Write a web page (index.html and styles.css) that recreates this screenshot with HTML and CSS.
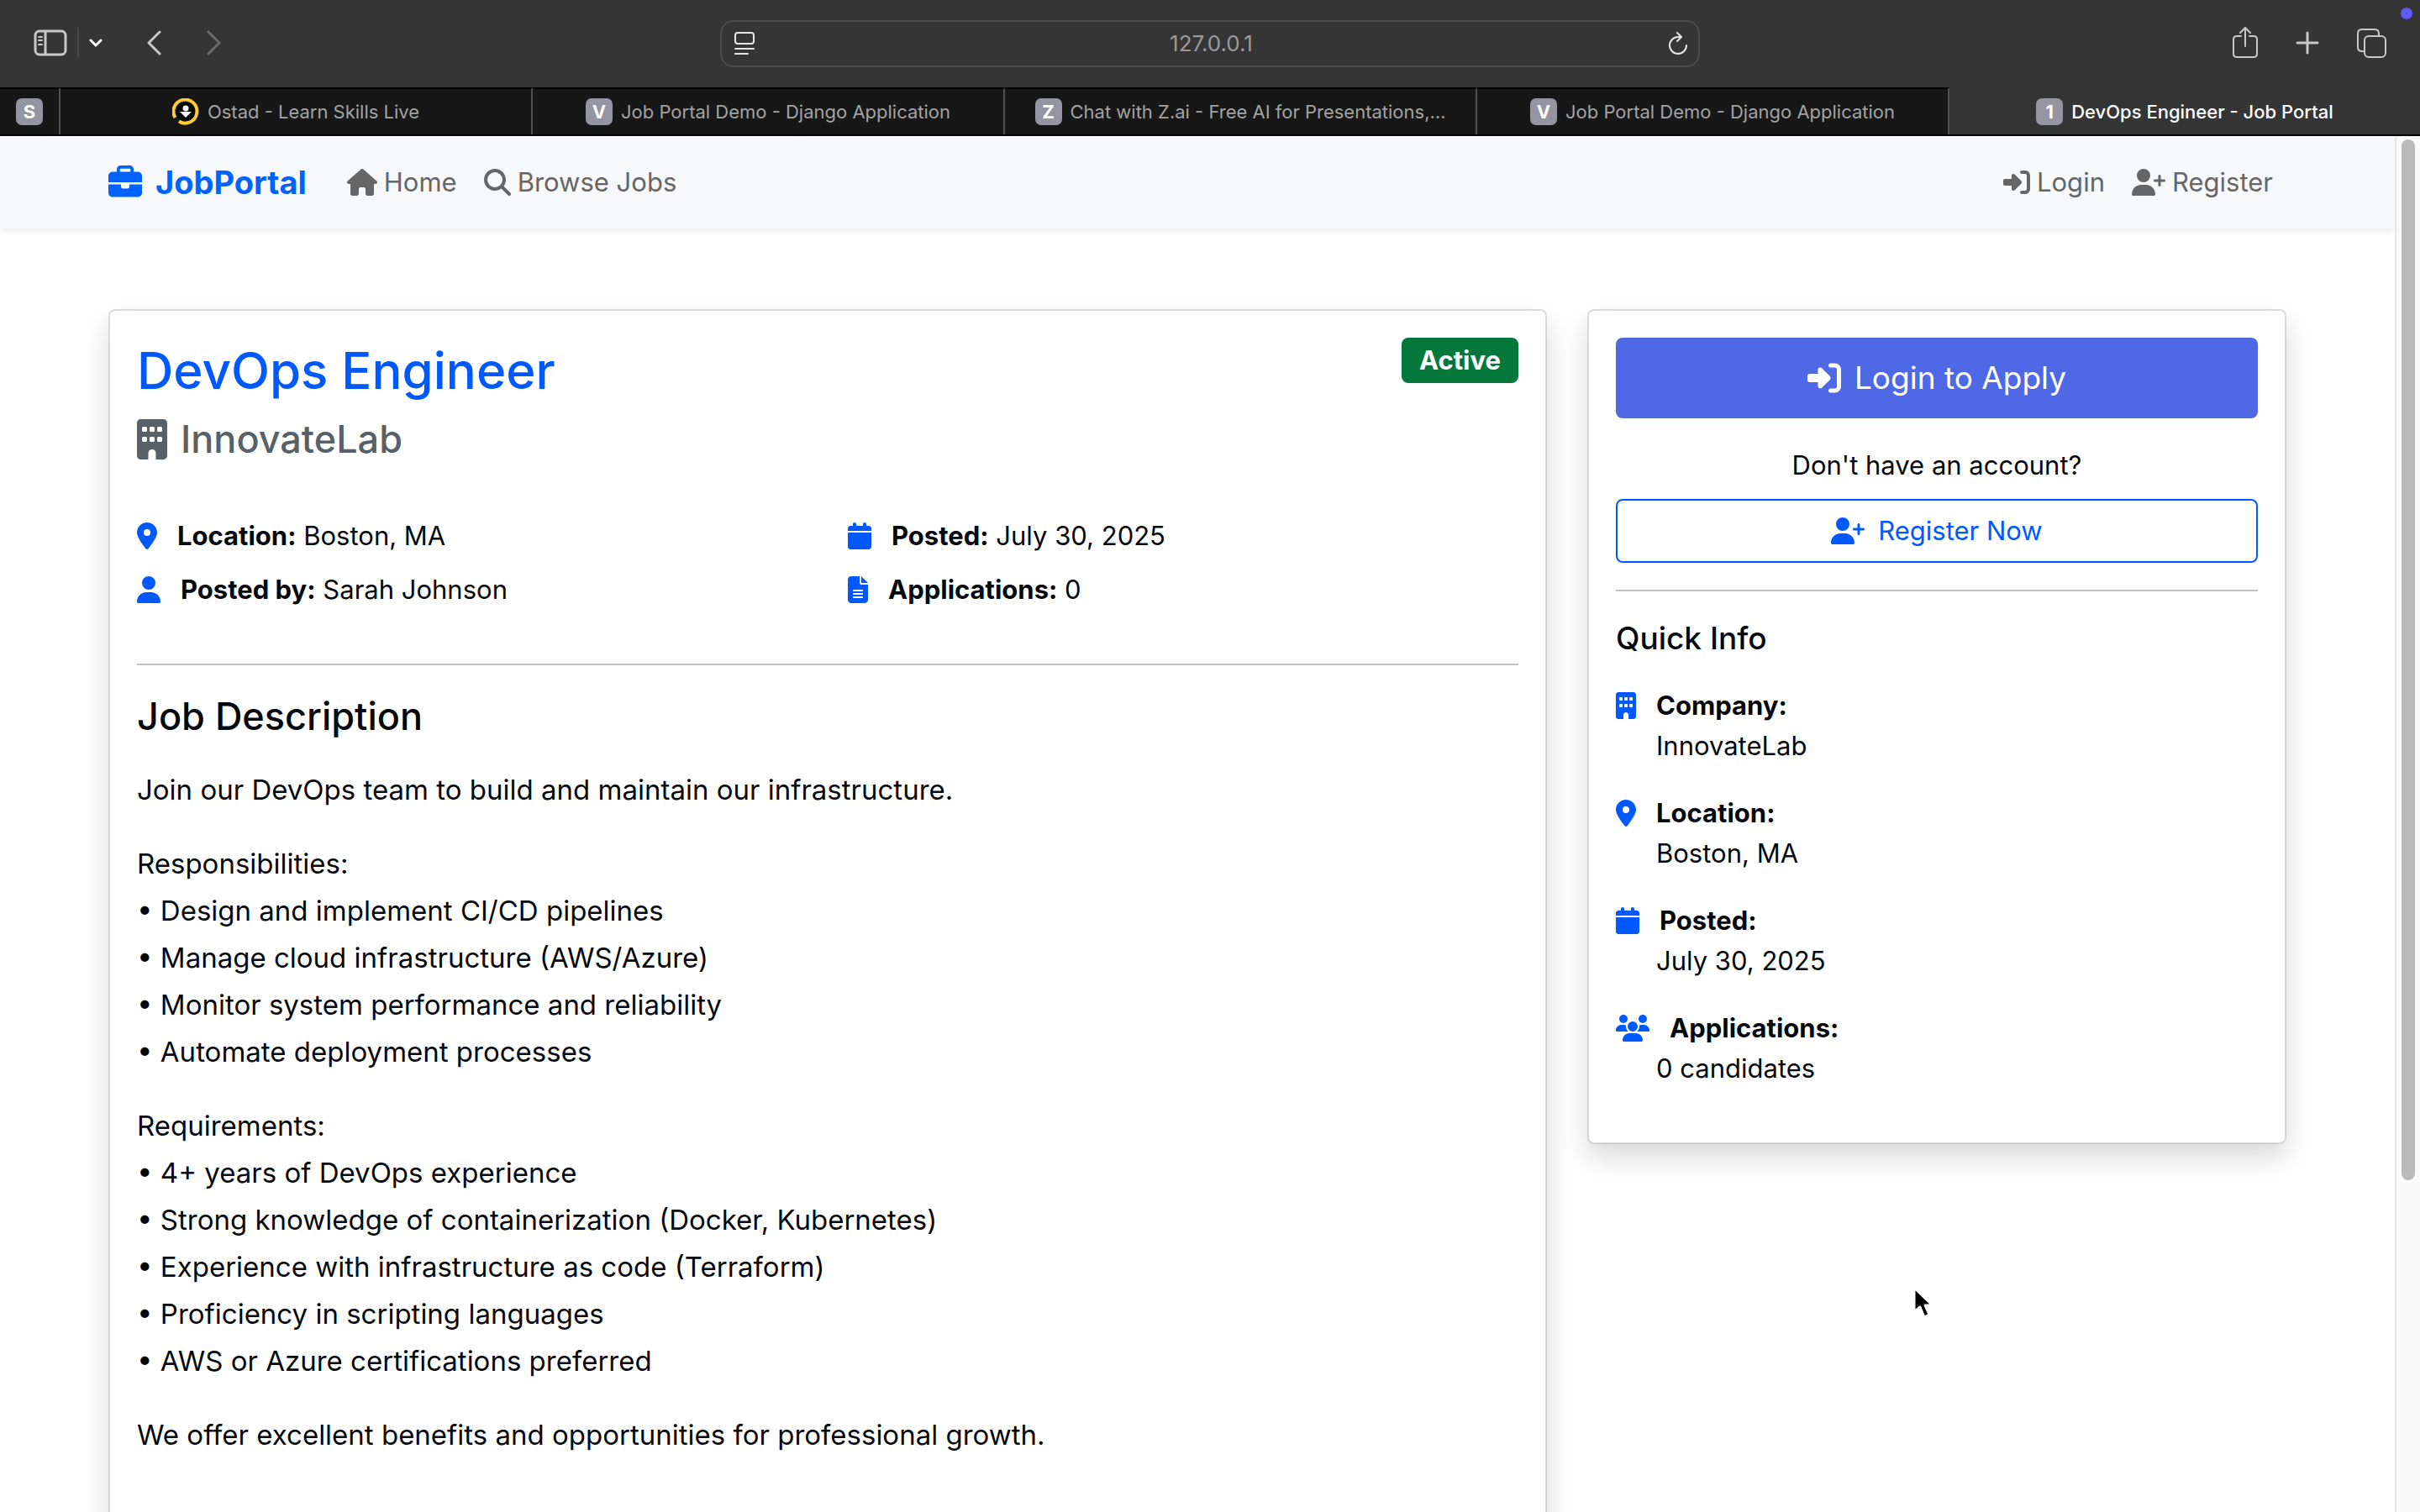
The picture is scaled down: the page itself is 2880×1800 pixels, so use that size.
FILE: index.html
```html
<!DOCTYPE html>
<html lang="en">
<head>
<meta charset="utf-8">
<title>DevOps Engineer - Job Portal</title>
<link rel="stylesheet" href="styles.css">
</head>
<body>
<svg class="sprite" aria-hidden="true">
  <symbol id="briefcase" viewBox="0 0 512 512"><path d="M184 48l144 0c4.400 0 8 3.600 8 8l0 40L176 96l0-40c0-4.400 3.600-8 8-8zm-56 8l0 40L64 96C28.700 96 0 124.700 0 160l0 96 192 0 128 0 192 0 0-96c0-35.300-28.700-64-64-64l-64 0 0-40c0-30.900-25.100-56-56-56L184 0c-30.900 0-56 25.100-56 56zM512 288l-192 0 0 32c0 17.700-14.300 32-32 32l-64 0c-17.700 0-32-14.300-32-32l0-32L0 288 0 416c0 35.300 28.700 64 64 64l384 0c35.300 0 64-28.700 64-64l0-128z"/></symbol>
  <symbol id="house" viewBox="0 0 576 512"><path d="M575.8 255.500c0 18-15 32.100-32 32.100l-32 0 .7 160.200c0 2.700-.2 5.400-.5 8.100l0 16.200c0 22.100-17.900 40-40 40l-16 0c-1.100 0-2.200 0-3.300-.1c-1.400 .1-2.800 .1-4.200 .1L416 512l-24 0c-22.100 0-40-17.900-40-40l0-24 0-64c0-17.700-14.300-32-32-32l-64 0c-17.700 0-32 14.300-32 32l0 64 0 24c0 22.100-17.900 40-40 40l-24 0-31.900 0c-1.500 0-3-.1-4.500-.2c-1.200 .1-2.400 .2-3.600 .2l-16 0c-22.100 0-40-17.900-40-40l0-112c0-.9 0-1.900 .1-2.800l0-69.700-32 0c-18 0-32-14-32-32.100c0-9 3-17 10-24L266.400 8c7-7 15-8 22-8s15 2 21 7L564.800 231.500c8 7 12 15 11 24z"/></symbol>
  <symbol id="search" viewBox="0 0 512 512"><path d="M416 208c0 45.900-14.900 88.300-40 122.700L502.600 457.400c12.500 12.500 12.500 32.800 0 45.300s-32.800 12.500-45.300 0L330.700 376c-34.400 25.200-76.800 40-122.700 40C93.100 416 0 322.900 0 208S93.100 0 208 0S416 93.100 416 208zM208 352a144 144 0 1 0 0-288 144 144 0 1 0 0 288z"/></symbol>
  <symbol id="login" viewBox="0 0 512 512"><path d="M217.900 105.900L340.700 228.700c7.200 7.200 11.300 17.100 11.300 27.300s-4.100 20.100-11.300 27.300L217.900 406.100c-6.400 6.400-15 9.900-24 9.900c-18.700 0-33.900-15.200-33.900-33.900l0-62.100L32 320c-17.700 0-32-14.300-32-32l0-64c0-17.700 14.300-32 32-32l128 0 0-62.100c0-18.700 15.200-33.900 33.900-33.900c9 0 17.600 3.600 24 9.900zM352 416l64 0c17.700 0 32-14.300 32-32l0-256c0-17.700-14.300-32-32-32l-64 0c-17.700 0-32-14.300-32-32s14.300-32 32-32l64 0c53 0 96 43 96 96l0 256c0 53-43 96-96 96l-64 0c-17.700 0-32-14.300-32-32s14.300-32 32-32z"/></symbol>
  <symbol id="user-plus" viewBox="0 0 640 512"><path d="M96 128a128 128 0 1 1 256 0A128 128 0 1 1 96 128zM0 482.300C0 383.800 79.800 304 178.300 304l91.400 0C368.200 304 448 383.800 448 482.300c0 16.400-13.300 29.700-29.700 29.700L29.700 512C13.300 512 0 498.700 0 482.300zM504 312l0-64-64 0c-13.300 0-24-10.700-24-24s10.700-24 24-24l64 0 0-64c0-13.300 10.700-24 24-24s24 10.700 24 24l0 64 64 0c13.300 0 24 10.700 24 24s-10.700 24-24 24l-64 0 0 64c0 13.300-10.700 24-24 24s-24-10.700-24-24z"/></symbol>
  <symbol id="user" viewBox="0 0 448 512"><path d="M224 256A128 128 0 1 0 224 0a128 128 0 1 0 0 256zm-45.700 48C79.800 304 0 383.800 0 482.300C0 498.700 13.300 512 29.700 512l388.600 0c16.400 0 29.700-13.300 29.700-29.700C448 383.800 368.200 304 269.700 304l-91.400 0z"/></symbol>
  <symbol id="pin" viewBox="0 0 384 512"><path d="M215.700 499.200C267 435 384 279.400 384 192C384 86 298 0 192 0S0 86 0 192c0 87.400 117 243 168.300 307.200c12.300 15.300 35.100 15.300 47.400 0zM192 128a64 64 0 1 1 0 128 64 64 0 1 1 0-128z"/></symbol>
  <symbol id="calendar" viewBox="0 0 448 512"><path d="M96 32l0 32L48 64C21.500 64 0 85.500 0 112l0 48 448 0 0-48c0-26.500-21.500-48-48-48l-48 0 0-32c0-17.700-14.300-32-32-32s-32 14.300-32 32l0 32L160 64l0-32c0-17.700-14.300-32-32-32S96 14.300 96 32zM448 192L0 192 0 464c0 26.500 21.500 48 48 48l352 0c26.500 0 48-21.500 48-48l0-272z"/></symbol>
  <symbol id="file" viewBox="0 0 384 512"><path d="M64 0C28.700 0 0 28.700 0 64L0 448c0 35.300 28.700 64 64 64l256 0c35.300 0 64-28.700 64-64l0-288-128 0c-17.700 0-32-14.300-32-32L224 0 64 0zM256 0l0 128 128 0L256 0zM112 256l160 0c8.800 0 16 7.200 16 16s-7.200 16-16 16l-160 0c-8.800 0-16-7.200-16-16s7.200-16 16-16zm0 64l160 0c8.800 0 16 7.200 16 16s-7.200 16-16 16l-160 0c-8.800 0-16-7.200-16-16s7.200-16 16-16zm0 64l160 0c8.800 0 16 7.200 16 16s-7.200 16-16 16l-160 0c-8.800 0-16-7.200-16-16s7.200-16 16-16z"/></symbol>
  <symbol id="building" viewBox="0 0 384 512"><path fill-rule="evenodd" d="M48 0C21.500 0 0 21.500 0 48L0 464c0 26.500 21.500 48 48 48l96 0 0-80c0-26.500 21.500-48 48-48s48 21.500 48 48l0 80 96 0c26.500 0 48-21.500 48-48l0-416c0-26.500-21.500-48-48-48L48 0zM80 96h32q16 0 16 16v32q0 16-16 16h-32q-16 0-16-16v-32q0-16 16-16zM176 96h32q16 0 16 16v32q0 16-16 16h-32q-16 0-16-16v-32q0-16 16-16zM272 96h32q16 0 16 16v32q0 16-16 16h-32q-16 0-16-16v-32q0-16 16-16zM80 224h32q16 0 16 16v32q0 16-16 16h-32q-16 0-16-16v-32q0-16 16-16zM176 224h32q16 0 16 16v32q0 16-16 16h-32q-16 0-16-16v-32q0-16 16-16zM272 224h32q16 0 16 16v32q0 16-16 16h-32q-16 0-16-16v-32q0-16 16-16z"/></symbol>
  <symbol id="users" viewBox="0 0 640 512"><path d="M144 0a80 80 0 1 1 0 160A80 80 0 1 1 144 0zM512 0a80 80 0 1 1 0 160A80 80 0 1 1 512 0zM0 298.700C0 239.800 47.800 192 106.700 192l42.700 0c15.900 0 31 3.500 44.600 9.700c-1.300 7.200-1.900 14.700-1.900 22.300c0 38.200 16.800 72.500 43.300 96c-.2 0-.4 0-.7 0L21.300 320C9.600 320 0 310.400 0 298.700zM405.300 320c-.2 0-.4 0-.7 0c26.600-23.500 43.300-57.800 43.300-96c0-7.600-.7-15-1.900-22.300c13.600-6.300 28.700-9.700 44.600-9.700l42.700 0C592.200 192 640 239.800 640 298.700c0 11.800-9.600 21.300-21.300 21.300l-213.300 0zM224 224a96 96 0 1 1 192 0 96 96 0 1 1 -192 0zM128 485.300C128 411.700 187.700 352 261.300 352l117.300 0C452.300 352 512 411.700 512 485.300c0 14.700-11.900 26.700-26.700 26.700l-330.700 0c-14.700 0-26.700-11.900-26.700-26.700z"/></symbol>
</svg>

<header class="toolbar">
  <div class="tools">
    <button class="tool" type="button" aria-label="Show sidebar"><svg width="40" height="32" viewBox="0 0 40 32"><g fill="none" stroke="currentColor" stroke-width="3"><rect x="2" y="2" width="36" height="28" rx="5"/><path d="M14 2v28"/><path stroke-width="2" stroke-linecap="round" d="M6 9h4M6 13h4M6 18h4"/></g></svg></button>
    <span class="tool-divider"></span>
    <button class="tool" type="button" aria-label="Tab groups"><svg width="16" height="12" viewBox="0 0 16 12"><path d="M2 3l6 6 6-6" fill="none" stroke="#fff" stroke-width="3" stroke-linecap="round" stroke-linejoin="round"/></svg></button>
    <button class="tool tool-back" type="button" aria-label="Back"><svg width="18" height="30" viewBox="0 0 18 30"><path d="M16 2L3 15l13 13" fill="none" stroke="currentColor" stroke-width="3" stroke-linecap="round" stroke-linejoin="round"/></svg></button>
    <button class="tool tool-forward" type="button" aria-label="Forward" disabled><svg width="18" height="30" viewBox="0 0 18 30"><path d="M2 2l13 13L2 28" fill="none" stroke="currentColor" stroke-width="3" stroke-linecap="round" stroke-linejoin="round"/></svg></button>
  </div>
  <div class="address">
    <button class="tool bright" type="button" aria-label="Page menu"><svg width="24" height="28" viewBox="0 0 24 28"><g fill="none" stroke="currentColor" stroke-width="2" stroke-linecap="round"><rect x="1" y="1" width="22" height="13" rx="3"/><path d="M1 20h22M1 26h15"/></g></svg></button>
    <input class="address-field" type="text" value="127.0.0.1" aria-label="Address">
    <button class="tool bright" type="button" aria-label="Reload"><svg width="24" height="28" viewBox="0 0 24 28"><g fill="none" stroke="currentColor" stroke-width="2" stroke-linecap="round" stroke-linejoin="round"><path d="M22 16a10 10 0 1 1-10-10h4"/><path d="M11 1l5 5-5 5"/></g></svg></button>
  </div>
  <div class="tools tools-end">
    <button class="tool" type="button" aria-label="Share"><svg width="32" height="40" viewBox="0 0 32 40"><g fill="none" stroke="currentColor" stroke-width="2" stroke-linecap="round" stroke-linejoin="round"><path d="M11 12H6q-4 0-4 4v17q0 4 4 4h20q4 0 4-4V16q0-4-4-4h-5"/><path d="M16 24V2M10 8l6-6 6 6"/></g></svg></button>
    <button class="tool" type="button" aria-label="New tab"><svg width="28" height="28" viewBox="0 0 28 28"><path d="M14 2v24M2 14h24" stroke="currentColor" stroke-width="3" stroke-linecap="round"/></svg></button>
    <button class="tool" type="button" aria-label="Tab overview"><svg width="36" height="36" viewBox="0 0 36 36"><g fill="none" stroke="currentColor" stroke-width="2"><rect x="10" y="10" width="25" height="25" rx="5"/><path d="M10 28H7q-5 0-5-5V7q0-5 5-5h15q5 0 5 5v3"/></g></svg></button>
  </div>
  <span class="record-dot"></span>
</header>

<nav class="tabs" aria-label="Open tabs">
  <a class="tab pinned" href="#"><span class="favicon">S</span></a>
  <a class="tab" href="#"><svg class="ostad" viewBox="0 0 32 32"><path d="M3.500 23A14 14 0 1 1 8 27.500" fill="none" stroke="#fc3" stroke-width="4"/><circle cx="16" cy="16" r="11" fill="#000"/><circle cx="16" cy="12" r="3.500" fill="#fff"/><path d="M9 16h14l-7 7z" fill="#fff"/></svg><span class="tab-title">Ostad - Learn Skills Live</span></a>
  <a class="tab" href="#"><span class="favicon">V</span><span class="tab-title">Job Portal Demo - Django Application</span></a>
  <a class="tab" href="#"><span class="favicon">Z</span><span class="tab-title">Chat with Z.ai - Free AI for Presentations,…</span></a>
  <a class="tab" href="#"><span class="favicon">V</span><span class="tab-title">Job Portal Demo - Django Application</span></a>
  <a class="tab active" href="#" aria-current="page"><span class="favicon">1</span><span class="tab-title">DevOps Engineer - Job Portal</span></a>
</nav>

<div class="viewport">
  <div class="page">
    <nav class="navbar" aria-label="Main">
      <div class="container navbar-row">
        <a class="brand" href="#"><svg class="icon square"><use href="#briefcase"/></svg>JobPortal</a>
        <a class="nav-link" href="#"><svg class="icon house"><use href="#house"/></svg>Home</a>
        <a class="nav-link" href="#"><svg class="icon square"><use href="#search"/></svg>Browse Jobs</a>
        <a class="nav-link nav-end" href="#"><svg class="icon square"><use href="#login"/></svg>Login</a>
        <a class="nav-link" href="#"><svg class="icon wide"><use href="#user-plus"/></svg>Register</a>
      </div>
    </nav>

    <main class="container layout">
      <article class="card">
        <div class="job-head">
          <div>
            <h1 class="job-title">DevOps Engineer</h1>
            <h2 class="company"><svg class="icon narrow"><use href="#building"/></svg>InnovateLab</h2>
          </div>
          <span class="badge">Active</span>
        </div>
        <div class="facts">
          <p class="fact"><svg class="icon narrow"><use href="#pin"/></svg><span><strong>Location:</strong> Boston, MA</span></p>
          <p class="fact"><svg class="icon medium"><use href="#calendar"/></svg><span><strong>Posted:</strong> July 30, 2025</span></p>
          <p class="fact"><svg class="icon medium"><use href="#user"/></svg><span><strong>Posted by:</strong> Sarah Johnson</span></p>
          <p class="fact"><svg class="icon narrow"><use href="#file"/></svg><span><strong>Applications:</strong> 0</span></p>
        </div>
        <hr class="rule">
        <h2 class="section-title">Job Description</h2>
        <div class="description">
          <p>Join our DevOps team to build and maintain our infrastructure.</p>
          <p>Responsibilities:<br>• Design and implement CI/CD pipelines<br>• Manage cloud infrastructure (AWS/Azure)<br>• Monitor system performance and reliability<br>• Automate deployment processes</p>
          <p>Requirements:<br>• 4+ years of DevOps experience<br>• Strong knowledge of containerization (Docker, Kubernetes)<br>• Experience with infrastructure as code (Terraform)<br>• Proficiency in scripting languages<br>• AWS or Azure certifications preferred</p>
          <p>We offer excellent benefits and opportunities for professional growth.</p>
        </div>
      </article>

      <aside class="card">
        <button class="btn btn-primary" type="button"><svg class="icon square"><use href="#login"/></svg>Login to Apply</button>
        <p class="hint">Don't have an account?</p>
        <button class="btn btn-outline" type="button"><svg class="icon wide"><use href="#user-plus"/></svg>Register Now</button>
        <hr class="rule">
        <h2 class="side-title">Quick Info</h2>
        <dl class="info">
          <div class="info-item"><dt class="fact"><svg class="icon narrow"><use href="#building"/></svg>Company:</dt><dd>InnovateLab</dd></div>
          <div class="info-item"><dt class="fact"><svg class="icon narrow"><use href="#pin"/></svg>Location:</dt><dd>Boston, MA</dd></div>
          <div class="info-item"><dt class="fact"><svg class="icon medium"><use href="#calendar"/></svg>Posted:</dt><dd>July 30, 2025</dd></div>
          <div class="info-item"><dt class="fact"><svg class="icon wide"><use href="#users"/></svg>Applications:</dt><dd>0 candidates</dd></div>
        </dl>
      </aside>
    </main>
  </div>
  <div class="scrollbar" aria-hidden="true"><div class="thumb"></div></div>
</div>

<svg class="cursor" width="32" height="44" viewBox="0 0 32 44" aria-hidden="true"><path d="M3 3v29l7-6 5 12 6-3-5-11h9z" fill="#000" stroke="#fff" stroke-width="3" stroke-linejoin="round"/></svg>
</body>
</html>
```
FILE: styles.css
```css
* { box-sizing: border-box; }

body {
  margin: 0;
  height: 100vh;
  display: flex;
  flex-direction: column;
  overflow: hidden;
  position: relative;
  background: #fff;
  color: #05080c;
  font: 400 31px/48px Inter, "Liberation Sans", sans-serif;
}

h1, h2, p, dl, dd { margin: 0; }
a { color: inherit; text-decoration: none; }
button { font: inherit; cursor: pointer; }
.sprite { position: absolute; width: 0; height: 0; }

/* Browser toolbar */
.toolbar {
  position: relative;
  flex: none;
  display: grid;
  grid-template-columns: 1fr minmax(0, 1166px) 1fr;
  align-items: center;
  height: 104px;
  padding: 0 40px;
  background: #353535;
}
.tools { display: flex; align-items: center; padding-bottom: 2px; }
.tools-end { justify-content: flex-end; gap: 44px; }
.tool {
  display: flex;
  padding: 0;
  border: 0;
  background: none;
  color: #c8c8c8;
}
.tool.bright { color: #e6e6e6; }
.tool:disabled { color: #6b6b6b; }
.tool-divider { width: 2px; height: 36px; margin: 0 12px; background: #484848; }
.tool-back { margin-left: 52px; }
.tool-forward { margin-left: 54px; }
.address {
  display: flex;
  align-items: center;
  height: 56px;
  padding: 0 12px 0 15px;
  border: 2px solid #4c4c4c;
  border-radius: 16px;
}
.address-field {
  flex: 1;
  min-width: 0;
  padding: 0;
  border: 0;
  outline: 0;
  background: none;
  color: #9a9a9a;
  font: 400 26px/32px Inter, sans-serif;
  text-align: center;
}
.record-dot {
  position: absolute;
  top: 9px;
  right: 9px;
  width: 14px;
  height: 14px;
  border-radius: 50%;
  background: #6059f5;
}

/* Tab strip */
.tabs {
  flex: none;
  display: flex;
  height: 58px;
  border-bottom: 2px solid #000;
  background: #353535;
  color: #a3a3a3;
  font-size: 22px;
  line-height: 28px;
}
.tab {
  flex: 1 1 0;
  min-width: 0;
  display: flex;
  align-items: center;
  justify-content: center;
  gap: 10px;
  border-top: 2px solid #000;
  border-right: 2px solid #4e4e4e;
  background: #171717;
}
.tab.pinned { flex: 0 0 72px; }
.tab.active {
  border-right: 0;
  border-color: #353535;
  background: #353535;
  color: #fff;
  font-weight: 500;
}
.tab-title { white-space: nowrap; }
.favicon {
  width: 32px;
  height: 32px;
  border-radius: 7px;
  background: #9494a3;
  color: #fff;
  font-size: 22px;
  font-weight: 700;
  line-height: 32px;
  text-align: center;
}
.ostad { width: 32px; height: 32px; }

/* Web page area */
.viewport { flex: 1; min-height: 0; display: flex; }
.page { flex: 1; min-width: 0; overflow: hidden; }
.scrollbar {
  flex: none;
  width: 30px;
  padding: 4px 6px;
  border-left: 2px solid #e6e6e6;
  background: #fafafa;
}
.thumb { width: 16px; height: 76%; border-radius: 8px; background: #bababa; }

.container { max-width: 2640px; margin: 0 auto; padding: 0 24px; }

.icon { flex: none; width: 32px; height: 32px; fill: currentColor; }
.icon.narrow { width: 24px; }
.icon.medium { width: 28px; }
.icon.house { width: 36px; }
.icon.wide { width: 40px; }

.navbar {
  background: #f7f8fa;
  box-shadow: 0 4px 8px rgba(0, 0, 0, .075);
}
.navbar-row { display: flex; align-items: center; height: 110px; }
.brand {
  display: flex;
  align-items: center;
  gap: 16px;
  margin-right: 32px;
  color: #0062ff;
  font-size: 38px;
  font-weight: 700;
}
.brand .icon { width: 40px; height: 40px; }
.nav-link {
  display: flex;
  align-items: center;
  gap: 8px;
  padding: 0 16px;
  color: #666;
}
.nav-end { margin-left: auto; }

.layout {
  display: grid;
  grid-template-columns: minmax(0, 1712fr) minmax(0, 832fr);
  align-items: start;
  gap: 48px;
  padding-top: 96px;
}
.card {
  padding: 32px;
  border: 2px solid rgba(0, 0, 0, .13);
  border-radius: 8px;
  background: #fff;
  background-clip: padding-box;
  box-shadow: 0 16px 32px rgba(0, 0, 0, .15);
}
.rule { margin: 0 0 32px; border: 0; border-top: 2px solid #c1c1c1; }

/* Job details */
.job-head { display: flex; justify-content: space-between; align-items: flex-start; }
.job-title {
  margin-bottom: 14px;
  color: #0058ff;
  font-size: 60px;
  font-weight: 500;
  line-height: 78px;
}
.company {
  display: flex;
  align-items: center;
  gap: 16px;
  color: #596168;
  font-size: 45px;
  font-weight: 500;
  line-height: 58px;
}
.company .icon { width: 36px; height: 48px; }
.badge {
  padding: 11px 21px;
  border-radius: 8px;
  background: #04773b;
  color: #fff;
  font-weight: 700;
  line-height: 32px;
}
.facts {
  display: grid;
  grid-template-columns: 1fr 1fr;
  gap: 16px 48px;
  margin: 62px 0 64px;
}
.fact { display: flex; align-items: center; gap: 24px; }
.fact .icon { color: #0058ff; }
.section-title {
  margin-bottom: 30px;
  font-size: 45px;
  font-weight: 500;
  line-height: 58px;
}
.description { padding-bottom: 48px; font-size: 33px; line-height: 56px; }
.description p { margin-bottom: 32px; }

/* Sidebar */
.btn {
  display: flex;
  align-items: center;
  justify-content: center;
  gap: 16px;
  width: 100%;
  border-radius: 8px;
}
.btn-primary {
  height: 96px;
  border: 0;
  background: #4f69e6;
  color: #fff;
  font-size: 37px;
}
.btn-primary .icon { width: 40px; height: 40px; }
.btn-outline {
  height: 76px;
  margin-bottom: 32px;
  border: 2px solid #0058ff;
  background: none;
  color: #0058ff;
}
.hint { margin: 32px 0 16px; text-align: center; }
.side-title { margin-bottom: 32px; font-size: 37px; font-weight: 500; }
.info-item { margin-bottom: 32px; }
.info-item dt { font-weight: 700; }
.info-item dd { padding-left: 48px; }

.cursor { position: absolute; left: 79%; top: 1530px; }
```
